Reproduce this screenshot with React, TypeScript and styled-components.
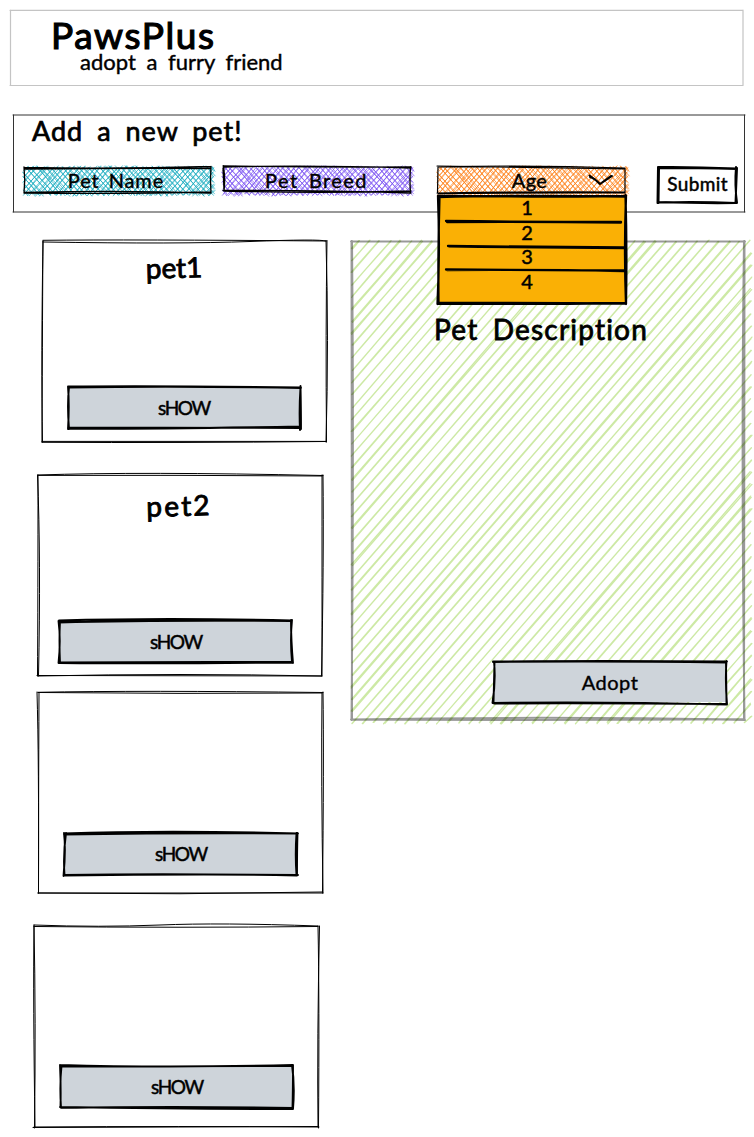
import React from "react";
import styled, { createGlobalStyle } from "styled-components";

const GlobalStyle = createGlobalStyle`
  * { box-sizing: border-box; }
  body { margin: 0; background: #fff; }
`;

/* ---------- sketch drawing ---------- */

type Box = [number, number, number, number];

const SketchSvg = styled.svg`
  position: absolute;
  inset: 0;
  z-index: -1;
  width: 100%;
  height: 100%;
  overflow: visible;
  pointer-events: none;
`;

const noise = (seed: number) => {
  const v = Math.sin(seed * 127.1 + 11.7) * 43758.5453;
  return v - Math.floor(v) - 0.5;
};

/* Diagonal pencil strokes clipped to a box; dir 1 leans right, -1 leans left. */
function hatch([x, y, w, h]: Box, step: number, dir: 1 | -1, jitter: number) {
  const slope = 1.15;
  const out: string[] = [];
  const run = h / slope;
  let n = 0;
  for (let s = step * 0.6; s < w + run; s += step) {
    for (let pass = 0; pass < 2; pass++) {
      n += 1;
      const t0 = Math.max(0, s - w);
      const t1 = Math.min(run, s);
      const px = (t: number) => (dir === 1 ? x + s - t : x + w - s + t);
      const j = (k: number) => noise(n * 7 + k) * jitter;
      const ax = px(t0) + j(1);
      const ay = y + t0 * slope + j(2);
      const bx = px(t1) + j(3);
      const by = y + t1 * slope + j(4);
      const mx = (ax + bx) / 2 + j(5) * 0.7;
      const my = (ay + by) / 2 + j(6) * 0.7;
      out.push(`M${ax.toFixed(1)} ${ay.toFixed(1)}Q${mx.toFixed(1)} ${my.toFixed(1)} ${bx.toFixed(1)} ${by.toFixed(1)}`);
    }
  }
  return out.join("");
}

interface SketchProps {
  box: Box;
  lines: string;
  weight?: number;
  ink?: string;
  fill?: string;
  hatching?: string;
  hatchColor?: string;
  hatchWeight?: number;
  mark?: string;
}

function Sketch({ box, lines, weight = 1, ink = "#000", fill, hatching, hatchColor, hatchWeight = 0.7, mark }: SketchProps) {
  const [x, y, w, h] = box;
  return (
    <SketchSvg viewBox={box.join(" ")} fill="none" strokeLinecap="round" preserveAspectRatio="none" aria-hidden>
      {fill && <rect x={x + 1} y={y + 1} width={w - 2} height={h - 2} fill={fill} />}
      {hatching && <path d={hatching} stroke={hatchColor} strokeWidth={hatchWeight} />}
      <path d={lines} stroke={ink} strokeWidth={weight} />
      {mark && <path d={mark} stroke={ink} strokeWidth={2} />}
    </SketchSvg>
  );
}

/* ---------- layout ---------- */

const Page = styled.div`
  display: flex;
  flex-direction: column;
  width: 754px;
  height: 1137px;
  padding: 10px 9px 0 10px;
  overflow: hidden;
  color: #000;
  font-family: Lato, "Open Sans", sans-serif;
`;

const Label = styled.span<{ $size: number; $track?: number; $word?: number; $ink?: number }>`
  display: block;
  white-space: nowrap;
  font-size: ${(p) => p.$size}px;
  line-height: 1;
  letter-spacing: ${(p) => p.$track ?? 0}px;
  word-spacing: ${(p) => p.$word ?? 0}px;
  -webkit-text-stroke: ${(p) => p.$ink ?? 0.4}px #000;
`;

const Header = styled.header`
  position: relative;
  isolation: isolate;
  display: flex;
  flex-direction: column;
  width: 733px;
  height: 75px;
  padding: 6px 0 0 41px;
`;

const Brand = styled.h1`
  height: 35px;
  margin: 0;
  font-weight: 400;
`;

const Tagline = styled.div`
  padding-left: 29px;
`;

const AddPet = styled.form`
  position: relative;
  isolation: isolate;
  z-index: 1;
  display: flex;
  flex-direction: column;
  width: 732px;
  height: 97px;
  margin: 30px 0 0 3px;
`;

const FormTitle = styled.div`
  height: 52px;
  padding: 2px 0 0 19px;
`;

const Fields = styled.div`
  display: flex;
  align-items: flex-start;
  padding-left: 11px;
`;

const Field = styled.div<{ $gap: number; $lead?: number }>`
  position: relative;
  isolation: isolate;
  display: flex;
  justify-content: center;
  width: 188px;
  height: 25px;
  margin-right: ${(p) => p.$gap}px;
  padding: 3px ${(p) => p.$lead ?? 0}px 0 0;
`;

const Submit = styled.button`
  position: relative;
  isolation: isolate;
  display: flex;
  justify-content: center;
  width: 79px;
  height: 35px;
  padding: 7px 0 0;
  border: 0;
  background: #fff;
  font: inherit;
`;

const Menu = styled.ul`
  position: absolute;
  isolation: isolate;
  z-index: 2;
  top: 28px;
  left: 0;
  display: flex;
  flex-direction: column;
  width: 188px;
  height: 109px;
  margin: 0;
  padding: 2px 0 0;
  list-style: none;
`;

const Option = styled.li`
  display: flex;
  justify-content: center;
  height: 24.6px;
  padding-right: 10px;
`;

const Board = styled.main`
  display: flex;
  align-items: flex-start;
  justify-content: space-between;
  padding: 29px 0 0 24px;
`;

const Cards = styled.div`
  display: flex;
  flex-direction: column;
  width: 293px;
`;

const Card = styled.article<{ $indent: number; $after: number; $foot: number; $btn: number }>`
  position: relative;
  isolation: isolate;
  display: flex;
  flex-direction: column;
  justify-content: space-between;
  width: 285px;
  height: 201px;
  margin: 0 0 ${(p) => p.$after}px ${(p) => p.$indent}px;
  padding: 12px 0 ${(p) => p.$foot}px ${(p) => p.$btn}px;
`;

const CardTitle = styled.div<{ $width: number; $drop: number }>`
  display: flex;
  justify-content: center;
  width: ${(p) => p.$width}px;
  padding-top: ${(p) => p.$drop}px;
  transform: rotate(-1.5deg);
`;

const Button = styled.button`
  position: relative;
  isolation: isolate;
  display: flex;
  justify-content: center;
  width: 234px;
  height: 42px;
  padding: 11px 0 0;
  border: 0;
  background: none;
  font: inherit;
`;

const Description = styled.section`
  position: relative;
  isolation: isolate;
  display: flex;
  flex-direction: column;
  justify-content: space-between;
  align-items: flex-end;
  width: 393px;
  height: 479px;
  padding: 74px 18px 17px 0;
`;

const DescriptionTitle = styled.div`
  width: 293px;
`;

/* ---------- data ---------- */

interface Pet {
  name?: string;
  titleWidth?: number;
  track?: number;
  drop?: number;
  indent: number;
  after: number;
  foot: number;
  btn: number;
  box: Box;
  lines: string;
  btnBox: Box;
  btnLines: string;
}

const pets: Pet[] = [
  {
    name: "pet1", titleWidth: 214, indent: 8, after: 33, foot: 13, btn: 25,
    box: [42, 241, 285, 201],
    lines: "M43 240.3Q130 239.4 326 241M43 242Q180 244.2 250 241.5T326 241M326 240.5Q329 340 326 442M327 240.5Q325.5 330 326.5 442M42 441.4L326 441.4M42 442.3Q180 443 326 441.5M43 241Q42.5 300 42 442M43 241Q41 360 42.5 442",
    btnBox: [67, 387, 234, 42],
    btnLines: "M68 386.5Q160 385.5 301 387.5M68 387.5Q180 386 301 388M300.5 386Q301 410 301 429M300.5 387Q299 410 300 430M68 428.8Q170 429 300 426.5M68 427.5Q160 428 301 428M68 386.5Q69.5 405 68 429M69 387Q67 405 69 429",
  },
  {
    name: "pet2", titleWidth: 240, track: 2.2, drop: 4, indent: 4, after: 16, foot: 13, btn: 21,
    box: [38, 475, 285, 201],
    lines: "M38 475Q140 471.5 323 475.5M38 475.4Q180 475 322 476M323 475Q324 560 321.5 676M322 475Q322 580 322 676M37 675.5L321 676M38 676Q180 673 322 676M37.5 475Q41 560 38.5 676M38 475Q38 600 37.5 676",
    btnBox: [59, 621, 234, 42],
    btnLines: "M59 620.5Q165 617.5 291 620.5M59 622.5Q150 620 291 621M291 620Q291 640 293 663M292 620Q290 640 292 662M59 663Q160 664 293 662.5M59 662.5Q170 661.5 292 662M58.5 621Q61 640 58.5 663M60 621Q59 640 60 663",
  },
  {
    indent: 4, after: 33, foot: 18, btn: 26,
    box: [38, 692, 285, 201],
    lines: "M38 692.3Q140 690.3 323 692.5M38 692.5Q180 694 322 693M323 692Q324 760 322.5 893M322 693Q321 780 323 893M38 893L323 893M38 893Q180 895 322 892M37 692Q39 760 38.5 893M39 693Q38.5 810 38.5 893",
    btnBox: [64, 833, 234, 42],
    btnLines: "M64 833.5Q165 830 298 833.5M64 834.5Q170 833 297 833.5M297.5 833Q297 850 297 875.5M296.5 833Q295 855 296.5 875M64 875.5Q180 874 298 875M64 875Q170 873 297 875.5M64 833Q66 850 63.5 876M66 833Q63 855 64.5 875",
  },
  {
    indent: 0, after: 0, foot: 19, btn: 26,
    box: [34, 926, 285, 201],
    lines: "M34 925Q100 927.5 160 925T318 926M34 926.5Q180 928 318 926.5M318 926Q319.5 1000 318.5 1128M319.5 926Q317 1040 318 1127M33 1127.5L318 1126.5M34 1127Q180 1126 319 1127M34 925Q36 1020 34.5 1128M34 926Q33 1000 35 1127",
    btnBox: [60, 1066, 234, 42],
    btnLines: "M60 1065Q165 1068 293 1065M61 1066.5Q170 1066 293 1066M292 1065Q295 1085 293 1109M293 1065Q293 1090 292.5 1108M60 1107Q180 1109 293 1109M61 1108Q170 1106 293 1108M60 1065Q61 1085 60.5 1107M61.5 1066Q59.5 1085 61 1108",
  },
];

const ages = [1, 2, 3, 4];

const crosshatch = (x: number, y: number) => {
  const b: Box = [x, y, 190, 28];
  return hatch(b, 5.3, 1, 2.6) + hatch(b, 5.3, -1, 2.6);
};

export default function App() {
  return (
    <>
      <GlobalStyle />
      <Page>
        <Header>
          <Sketch box={[10, 10, 733, 75]} ink="#c4c4c4" lines="M10 10.3H743M743 10V85.5M743 85.5H10M10.5 85V10" weight={1.2} />
          <Brand><Label $size={37} $track={1.6} $ink={1.2}>PawsPlus</Label></Brand>
          <Tagline><Label $size={22} $word={5}>adopt a furry friend</Label></Tagline>
        </Header>

        <AddPet>
          <Sketch box={[13, 115, 732, 97]} ink="#333" lines="M13 115H745M744.5 115V212M745 212H13M13.5 212V115" />
          <FormTitle><Label $size={27} $track={1} $word={6} $ink={0.7}>Add a new pet!</Label></FormTitle>
          <Fields>
            <Field $gap={11} $lead={4}>
              <Sketch
                box={[24, 167, 188, 25]} weight={1.3} hatching={crosshatch(24, 167)} hatchColor="#15aabf"
                lines="M24 167.5Q120 169 211 166.5M24 169Q130 168 211 168.5M211 166.5Q210 180 211 193M24 192.5Q120 190 211 193M24 193Q130 194 211 192M24 167Q25.5 180 24 193"
              />
              <Label $size={20} $track={0.9} $word={3}>Pet Name</Label>
            </Field>
            <Field $gap={27} $lead={1}>
              <Sketch
                box={[223, 167, 188, 25]} weight={1.3} hatching={crosshatch(223, 167)} hatchColor="#7950f2"
                lines="M223 166Q310 167.5 411 167M224 167Q310 165 411 168M410.5 167Q409.5 180 410.5 193M223 190.5Q320 190 411 193M224 191Q320 193.5 411 191M223.5 166Q225.5 180 224 191M223 168L224 190"
              />
              <Label $size={20} $track={1.4} $word={4}>Pet Breed</Label>
            </Field>
            <Field $gap={32} $lead={5}>
              <Sketch
                box={[438, 167, 188, 25]} weight={1.2} hatching={crosshatch(438, 167)} hatchColor="#fd7e14"
                lines="M437 166Q530 167.5 625 169M438 167Q530 165 625 168M625 168V193M437 193Q530 191.5 625 192M438 194Q530 192.5 625 193M438 167L437.5 193"
                mark="M589.5 175.5Q595 179 600 184L612 176M590 177Q594 178 599 183M602 182.500L611 176"
              />
              <Label $size={20} $track={0.4}>Age</Label>
              <Menu>
                <Sketch
                  box={[438, 195, 188, 109]} weight={2.3} fill="#fab005"
                  lines="M438 196Q530 197 626 196M438 197Q520 195 626 196.5M625.5 195Q627 250 626 304M626 196Q624 250 626 304M438 303.5Q530 304.5 626 303M438 303Q530 302.5 626 303.5M438 196Q440 250 437.5 304M439.5 196Q438 250 438.5 303M446 221Q530 222 621 222M447 222Q530 221.5 621 222.5M448 246Q540 247 624 247.5M449 246.5Q540 247 624 248M446 269.5Q540 270 624 270.5M447 270Q540 269.5 624 271"
                />
                {ages.map((age) => <Option key={age}><Label $size={20} $ink={0.5}>{age}</Label></Option>)}
              </Menu>
            </Field>
            <Submit type="button">
              <Sketch
                box={[658, 167, 79, 35]} weight={2}
                lines="M658 167Q690 166.5 737 168.5M658 168Q700 168 737 169M736 167Q734.5 185 737 203M737 168L735.5 203M658 202.5Q700 201.5 736 203M658 202Q700 203.5 736 203M658 167L657.5 203M659 168L658.5 203"
              />
              <Label $size={19} $track={0.4} $ink={0.5}>Submit</Label>
            </Submit>
          </Fields>
        </AddPet>

        <Board>
          <Cards>
            {pets.map((pet, i) => (
              <Card key={i} $indent={pet.indent} $after={pet.after} $foot={pet.foot} $btn={pet.btn}>
                <Sketch box={pet.box} lines={pet.lines} />
                <CardTitle $width={pet.titleWidth ?? 214} $drop={pet.drop ?? 0}>
                  {pet.name && <Label $size={28} $track={pet.track} $ink={0.9}>{pet.name}</Label>}
                </CardTitle>
                <Button>
                  <Sketch box={pet.btnBox} lines={pet.btnLines} weight={1.9} fill="#ced4da" />
                  <Label $size={19} $track={-1.3} $ink={0.5}>sHOW</Label>
                </Button>
              </Card>
            ))}
          </Cards>
          <Description>
            <Sketch
              box={[352, 241, 393, 479]} weight={2} ink="rgba(0,0,0,.4)"
              hatching={hatch([352, 241, 399, 482], 10.6, 1, 1.9)} hatchColor="rgba(130,201,30,.4)" hatchWeight={1.3}
              lines="M351 241.5H745M744 241Q741 450 744.5 720M745 720Q560 716 351 719.5M352 719.5Q560 720.5 744 719M352 241Q354 450 351.5 720M351.500 241L352 720M744.500 241L744 720"
            />
            <DescriptionTitle><Label $size={28} $track={1.2} $word={6} $ink={0.8}>Pet Description</Label></DescriptionTitle>
            <Button>
              <Sketch
                box={[493, 661, 234, 42]} weight={1.9} fill="#ced4da"
                lines="M493 661.5Q600 660.5 727 661.5M493 662Q600 661 726 662.5M726.5 661Q725 680 727 704M726 662L726.5 704M493 703Q600 701.5 727 704.5M494 703.5Q600 703 726 704M494 661.5Q496 680 492.5 703M494.5 662L493.5 703"
              />
              <Label $size={20} $track={0.5}>Adopt</Label>
            </Button>
          </Description>
        </Board>
      </Page>
    </>
  );
}
